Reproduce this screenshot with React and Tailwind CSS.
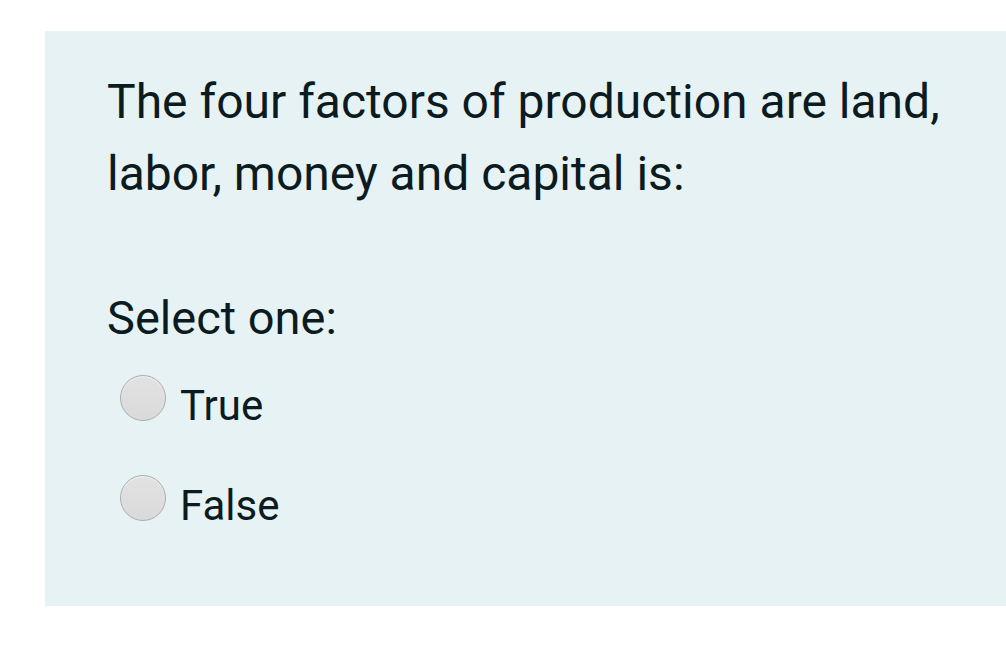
const options = ["True", "False"];

export default function App() {
  return (
    <div className="min-h-[657px] bg-white pt-[31px] pl-[45px] font-['Roboto',sans-serif] text-[#0b1b20]">
      <div className="h-[575px] bg-[#e7f2f5] pl-[62px] pt-[35px]">
        {/* Question */}
        <p className="text-[48px] leading-[72px]">
          The four factors of production are land,
          <br />
          labor, money and capital is:
        </p>

        {/* Answers */}
        <p className="mt-[72px] text-[47px] leading-[72px]">Select one:</p>
        <div className="mt-[19px] flex flex-col gap-[28px] pl-[13px]">
          {options.map((opt) => (
            <label key={opt} className="flex h-[72px] items-start gap-[14px]">
              <span className="mt-[2px] size-[46px] rounded-full border border-[#a9adaf] bg-gradient-to-b from-[#e2e2e2] to-[#dadada] shadow-[inset_0_1px_1px_rgba(255,255,255,0.6)]" />
              <span className="mt-[8px] text-[42px] leading-[50px]">{opt}</span>
            </label>
          ))}
        </div>
      </div>
    </div>
  );
}
